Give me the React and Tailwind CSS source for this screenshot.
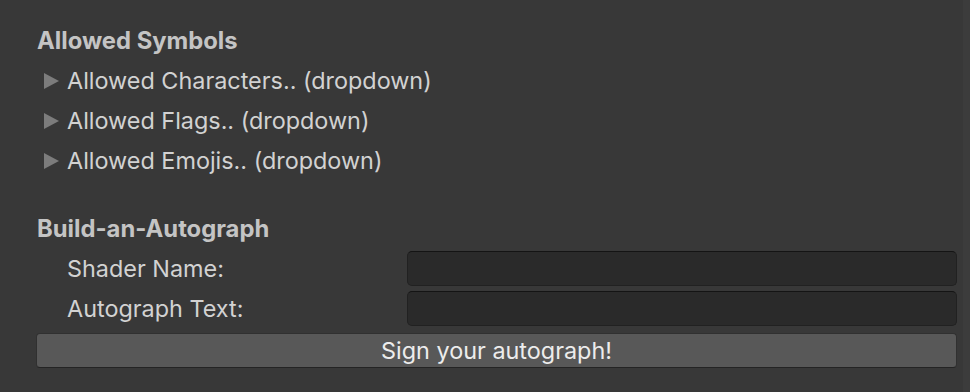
import React from 'react';

const font = { fontFamily: 'Inter, "Noto Sans", sans-serif' };

const Foldout = ({ label }) => (
  <div className="flex items-center h-[40px] pl-[8px]">
    <svg width="15" height="16" viewBox="0 0 15 16" className="shrink-0">
      <polygon points="0,0 15,8 0,16" fill="#7c7c7c" />
    </svg>
    <span className="ml-[8px] text-[23.4px] text-[#d2d2d2]">{label}</span>
  </div>
);

const FieldRow = ({ label }) => (
  <div className="flex items-center h-[35px]">
    <span className="w-[371px] pl-[31px] text-[23.4px] text-[#d2d2d2]">{label}</span>
    <div className="flex-1 h-full rounded-[5px] bg-[#2a2a2a] border border-[#212121] border-t-[#141414]" />
  </div>
);

const App = () => {
  return (
    <div className="w-[970px] h-[392px] bg-[#383838] flex overflow-hidden" style={font}>
      <div className="flex-1 pl-[36px] pr-[6px] pt-[21px]">
        <div className="h-[40px] flex items-center pl-[1px] text-[23.8px] font-bold text-[#c4c4c4]">
          Allowed Symbols
        </div>
        <Foldout label="Allowed Characters.. (dropdown)" />
        <Foldout label="Allowed Flags.. (dropdown)" />
        <Foldout label="Allowed Emojis.. (dropdown)" />
        <div className="mt-[28px] h-[40px] flex items-center pl-[1px] text-[23.8px] font-bold text-[#c4c4c4]">
          Build-an-Autograph
        </div>
        <div className="mt-[2px] flex flex-col gap-[5px]">
          <FieldRow label="Shader Name:" />
          <FieldRow label="Autograph Text:" />
        </div>
        <button className="mt-[7px] w-full h-[35px] rounded-[4px] bg-[#585858] border border-[#303030] border-b-[#242424] text-[23.4px] text-[#ececec] flex items-center justify-center">
          Sign your autograph!
        </button>
      </div>
      <div className="w-[7px] bg-[#3c3c3c]" />
    </div>
  );
};

export default App;
